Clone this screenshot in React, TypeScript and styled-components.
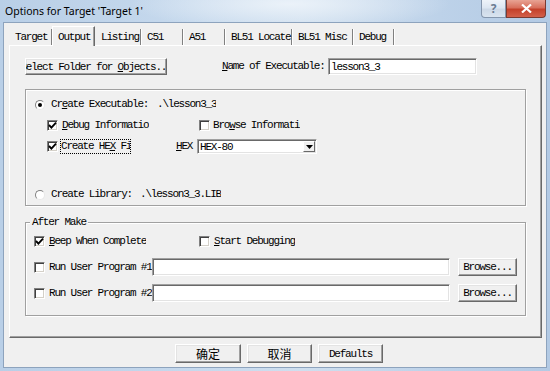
import React from 'react';
import styled, { createGlobalStyle } from 'styled-components';

const mono = `"Liberation Mono", "DejaVu Sans Mono", monospace`;

const GlobalStyle = createGlobalStyle`
  html, body {
    margin: 0;
    padding: 0;
  }
  body {
    width: 550px;
    height: 371px;
    overflow: hidden;
    background: #bfd4ea;
  }
`;

const Window = styled.div`
  width: 550px;
  height: 371px;
  box-sizing: border-box;
  padding: 0 3px 3px 3px;
  display: flex;
  flex-direction: column;
  background:
    radial-gradient(ellipse 160px 26px at 290px 4px, rgba(238, 244, 250, 0.9), rgba(238, 244, 250, 0) 100%),
    linear-gradient(90deg, #b9cfe7 0%, #c6d9ed 35%, #cfdfef 55%, #bdd2e9 80%, #b3cae4 100%);
`;

const TitleBar = styled.div`
  height: 22px;
  display: flex;
  align-items: flex-start;
  flex: none;
`;

const Title = styled.div`
  flex: 1;
  padding: 5px 0 0 2px;
  font-family: "Noto Sans", "Open Sans", sans-serif;
  font-size: 10.5px;
  line-height: 13px;
  color: #000;
`;

const Caption = styled.div`
  display: flex;
  margin-right: 1px;
`;

const CaptionButton = styled.div<{ $w: number; $close?: boolean }>`
  width: ${(p) => p.$w}px;
  height: 18px;
  box-sizing: border-box;
  display: flex;
  align-items: center;
  justify-content: center;
  border: 1px solid ${(p) => (p.$close ? '#7a3b32' : '#8496ad')};
  border-top: none;
  border-radius: ${(p) => (p.$close ? '0 0 4px 0' : '0 0 0 4px')};
  background: ${(p) =>
    p.$close
      ? 'linear-gradient(180deg, #e8a394 0%, #d8705d 45%, #c4412b 55%, #d3604a 100%)'
      : 'linear-gradient(180deg, #eef3f9 0%, #dde7f2 45%, #cdd9e7 55%, #d9e4f0 100%)'};
  color: ${(p) => (p.$close ? '#fff' : '#6b7d93')};
  font-family: "Noto Sans", sans-serif;
  font-size: 12px;
  font-weight: bold;
`;

const Client = styled.div`
  flex: 1;
  display: flex;
  flex-direction: column;
  background: #f0f0f0;
  border: 1px solid #8da3bd;
  padding: 4px 4px 0 5px;
`;

const TabStrip = styled.div`
  display: flex;
  align-items: flex-end;
  height: 18px;
  flex: none;
`;

const Tab = styled.div<{ $w: number; $active?: boolean }>`
  width: ${(p) => p.$w}px;
  box-sizing: border-box;
  height: ${(p) => (p.$active ? 20 : 16)}px;
  padding: ${(p) => (p.$active ? '1px 0 0 5px' : '0 0 0 6px')};
  display: flex;
  align-items: center;
  font-family: ${mono};
  font-size: 11px;
  letter-spacing: -1.2px;
  color: #000;
  white-space: nowrap;
  border-right: 1px solid #808080;
  box-shadow: 1px 0 0 #ffffff;
  ${(p) =>
    p.$active
      ? `
    position: relative;
    z-index: 1;
    margin-bottom: -1px;
    background: #f0f0f0;
    border-top: 1px solid #ffffff;
    border-left: 1px solid #ffffff;
    border-right: 1px solid #696969;
    box-shadow: inset -1px 0 0 #a0a0a0;
  `
      : ''}
`;

const Panel = styled.div`
  height: 293px;
  box-sizing: border-box;
  flex: none;
  border: 1px solid;
  border-color: #ffffff #696969 #696969 #ffffff;
  box-shadow: inset -1px -1px 0 #a0a0a0;
  padding: 12px 0 0 15px;
  display: flex;
  flex-direction: column;
`;

const TopRow = styled.div`
  display: flex;
  align-items: center;
  height: 17px;
`;

const PushButton = styled.div<{ $w: number; $h: number; $ml?: number }>`
  width: ${(p) => p.$w}px;
  height: ${(p) => p.$h}px;
  margin-left: ${(p) => p.$ml ?? 0}px;
  box-sizing: border-box;
  flex: none;
  display: flex;
  align-items: center;
  justify-content: center;
  overflow: hidden;
  background: #f0f0f0;
  border: 1px solid;
  border-color: #ffffff #696969 #696969 #ffffff;
  box-shadow: inset -1px -1px 0 #a0a0a0, inset 1px 1px 0 #e3e3e3;
  font-family: ${mono};
  font-size: 11px;
  letter-spacing: -1.2px;
  color: #000;
  white-space: nowrap;
`;

const CjkText = styled.span`
  font-family: "Noto Sans CJK SC", sans-serif;
  font-size: 12px;
  letter-spacing: 0;
`;

const Label = styled.span<{ $w?: number; $ml?: number; $focus?: boolean }>`
  ${(p) => (p.$w ? `width: ${p.$w}px;` : '')}
  margin-left: ${(p) => p.$ml ?? 0}px;
  flex: none;
  overflow: hidden;
  white-space: nowrap;
  font-family: ${mono};
  font-size: 11px;
  letter-spacing: -1.2px;
  line-height: 13px;
  color: #000;
  ${(p) => (p.$focus ? 'outline: 1px dotted #000; outline-offset: 0;' : '')}
`;

const Key = styled.span`
  text-decoration: underline;
  text-underline-offset: 1px;
`;

const Field = styled.div<{ $w: number; $h: number; $ml?: number }>`
  width: ${(p) => p.$w}px;
  height: ${(p) => p.$h}px;
  margin-left: ${(p) => p.$ml ?? 0}px;
  flex: none;
  box-sizing: border-box;
  display: flex;
  align-items: center;
  padding-left: 2px;
  background: #ffffff;
  border: 1px solid;
  border-color: #a0a0a0 #ffffff #ffffff #a0a0a0;
  box-shadow: inset 1px 1px 0 #696969, inset -1px -1px 0 #e3e3e3;
  font-family: ${mono};
  font-size: 11px;
  letter-spacing: -1.2px;
  color: #000;
`;

const GroupBox = styled.div<{ $h: number; $mt: number; $pl: number; $pt: number }>`
  position: relative;
  width: 501px;
  height: ${(p) => p.$h}px;
  margin-top: ${(p) => p.$mt}px;
  box-sizing: border-box;
  flex: none;
  padding: ${(p) => p.$pt}px 0 0 ${(p) => p.$pl}px;
  border: 1px solid #a0a0a0;
  box-shadow: inset 1px 1px 0 #ffffff, 1px 1px 0 #ffffff;
  display: flex;
  flex-direction: column;
`;

const Legend = styled.span`
  position: absolute;
  top: -7px;
  left: 4px;
  padding: 0 2px;
  background: #f0f0f0;
  font-family: ${mono};
  font-size: 11px;
  letter-spacing: -1.2px;
  line-height: 13px;
  color: #000;
`;

const Row = styled.div<{ $h: number; $mt?: number; $ml?: number }>`
  display: flex;
  align-items: center;
  height: ${(p) => p.$h}px;
  margin-top: ${(p) => p.$mt ?? 0}px;
  margin-left: ${(p) => p.$ml ?? 0}px;
  flex: none;
`;

const Cell = styled.div<{ $w: number }>`
  width: ${(p) => p.$w}px;
  flex: none;
  display: flex;
  align-items: center;
`;

const CheckBox = styled.span<{ $gap: number }>`
  width: 11px;
  height: 11px;
  box-sizing: border-box;
  flex: none;
  margin-right: ${(p) => p.$gap}px;
  display: flex;
  align-items: center;
  justify-content: center;
  background: #ffffff;
  border: 1px solid;
  border-color: #808080 #ffffff #ffffff #808080;
  box-shadow: inset 1px 1px 0 #404040, inset -1px -1px 0 #d4d0c8;
`;

const Radio = styled.span`
  width: 10px;
  height: 10px;
  box-sizing: border-box;
  flex: none;
  margin-right: 6px;
  border-radius: 50%;
  display: flex;
  align-items: center;
  justify-content: center;
  background: #ffffff;
  border: 1px solid;
  border-color: #808080 #e8e8e8 #e8e8e8 #808080;
`;

const RadioDot = styled.span`
  width: 4px;
  height: 4px;
  border-radius: 50%;
  background: #000;
`;

const Select = styled(Field)`
  justify-content: space-between;
  padding-right: 1px;
`;

const SelectArrow = styled.span`
  width: 12px;
  height: 11px;
  box-sizing: border-box;
  display: flex;
  align-items: center;
  justify-content: center;
  background: #f0f0f0;
  border: 1px solid;
  border-color: #ffffff #696969 #696969 #ffffff;
`;

const ButtonBar = styled.div`
  display: flex;
  gap: 6px;
  margin-top: 6px;
  padding-left: 166px;
`;

const Check = () => (
  <svg width="9" height="9" viewBox="0 0 9 9">
    <polyline points="1,4 3.4,6.6 8,1.6" fill="none" stroke="#000" strokeWidth="1.9" />
  </svg>
);

type CheckProps = { checked?: boolean; gap: number };

const Box = ({ checked, gap }: CheckProps) => (
  <CheckBox $gap={gap}>{checked && <Check />}</CheckBox>
);

const tabs = [
  { label: 'Target', w: 43 },
  { label: 'Output', w: 43, active: true },
  { label: 'Listing', w: 46 },
  { label: 'C51', w: 42 },
  { label: 'A51', w: 42 },
  { label: 'BL51 Locate', w: 67 },
  { label: 'BL51 Misc', w: 61 },
  { label: 'Debug', w: 41 },
];

export default function App() {
  return (
    <>
      <GlobalStyle />
      <Window>
        <TitleBar>
          <Title>Options for Target 'Target 1'</Title>
          <Caption>
            <CaptionButton $w={25}>?</CaptionButton>
            <CaptionButton $w={40} $close>
              <svg width="11" height="9" viewBox="0 0 11 9">
                <path d="M1 0.5 L10 8.5 M10 0.5 L1 8.5" stroke="#fff" strokeWidth="2.2" />
              </svg>
            </CaptionButton>
          </Caption>
        </TitleBar>

        <Client>
          <TabStrip>
            {tabs.map((t) => (
              <Tab key={t.label} $w={t.w} $active={t.active}>
                {t.label}
              </Tab>
            ))}
          </TabStrip>

          <Panel>
            <TopRow>
              <PushButton $w={142} $h={17}>
                Select Folder for&nbsp;<Key>O</Key>bjects...
              </PushButton>
              <Label $w={106} $ml={55}>
                <Key>N</Key>ame of Executable:
              </Label>
              <Field $w={149} $h={17}>lesson3_3</Field>
            </TopRow>

            <GroupBox $h={117} $mt={14} $pl={9} $pt={4}>
              <Row $h={21}>
                <Radio>
                  <RadioDot />
                </Radio>
                <Label $w={106}>
                  Cr<Key>e</Key>ate Executable:
                </Label>
                <Label>.\lesson3_3</Label>
              </Row>
              <Row $h={21} $ml={12}>
                <Cell $w={152}>
                  <Box checked gap={4} />
                  <Label $w={87}>
                    <Key>D</Key>ebug Information
                  </Label>
                </Cell>
                <Box gap={3} />
                <Label $w={87}>
                  Bro<Key>w</Key>se Information
                </Label>
              </Row>
              <Row $h={21} $ml={12}>
                <Cell $w={129}>
                  <Box checked gap={3} />
                  <Label $w={69} $focus>
                    Create HE<Key>X</Key> File
                  </Label>
                </Cell>
                <Label $w={21}>
                  <Key>H</Key>EX
                </Label>
                <Select $w={120} $h={15}>
                  HEX-80
                  <SelectArrow>
                    <svg width="7" height="4" viewBox="0 0 7 4">
                      <path d="M0 0 H7 L3.5 4 Z" fill="#000" />
                    </svg>
                  </SelectArrow>
                </Select>
              </Row>
              <Row $h={21} $mt={27}>
                <Radio />
                <Label $w={89}>Create Library:</Label>
                <Label>.\lesson3_3.LIB</Label>
              </Row>
            </GroupBox>

            <GroupBox $h={94} $mt={16} $pl={8} $pt={8}>
              <Legend>After Make</Legend>
              <Row $h={20}>
                <Cell $w={165}>
                  <Box checked gap={4} />
                  <Label>
                    <Key>B</Key>eep When Complete
                  </Label>
                </Cell>
                <Box gap={4} />
                <Label>
                  <Key>S</Key>tart Debugging
                </Label>
              </Row>
              <Row $h={18} $mt={7}>
                <Box gap={4} />
                <Label $w={103}>Run User Program #1</Label>
                <Field $w={298} $h={18} />
                <PushButton $w={59} $h={18} $ml={8}>
                  Browse...
                </PushButton>
              </Row>
              <Row $h={18} $mt={8}>
                <Box gap={4} />
                <Label $w={103}>Run User Program #2</Label>
                <Field $w={298} $h={18} />
                <PushButton $w={59} $h={18} $ml={8}>
                  Browse...
                </PushButton>
              </Row>
            </GroupBox>
          </Panel>

          <ButtonBar>
            <PushButton $w={66} $h={19}>
              <CjkText>确定</CjkText>
            </PushButton>
            <PushButton $w={65} $h={19}>
              <CjkText>取消</CjkText>
            </PushButton>
            <PushButton $w={65} $h={19}>
              Defaults
            </PushButton>
          </ButtonBar>
        </Client>
      </Window>
    </>
  );
}
